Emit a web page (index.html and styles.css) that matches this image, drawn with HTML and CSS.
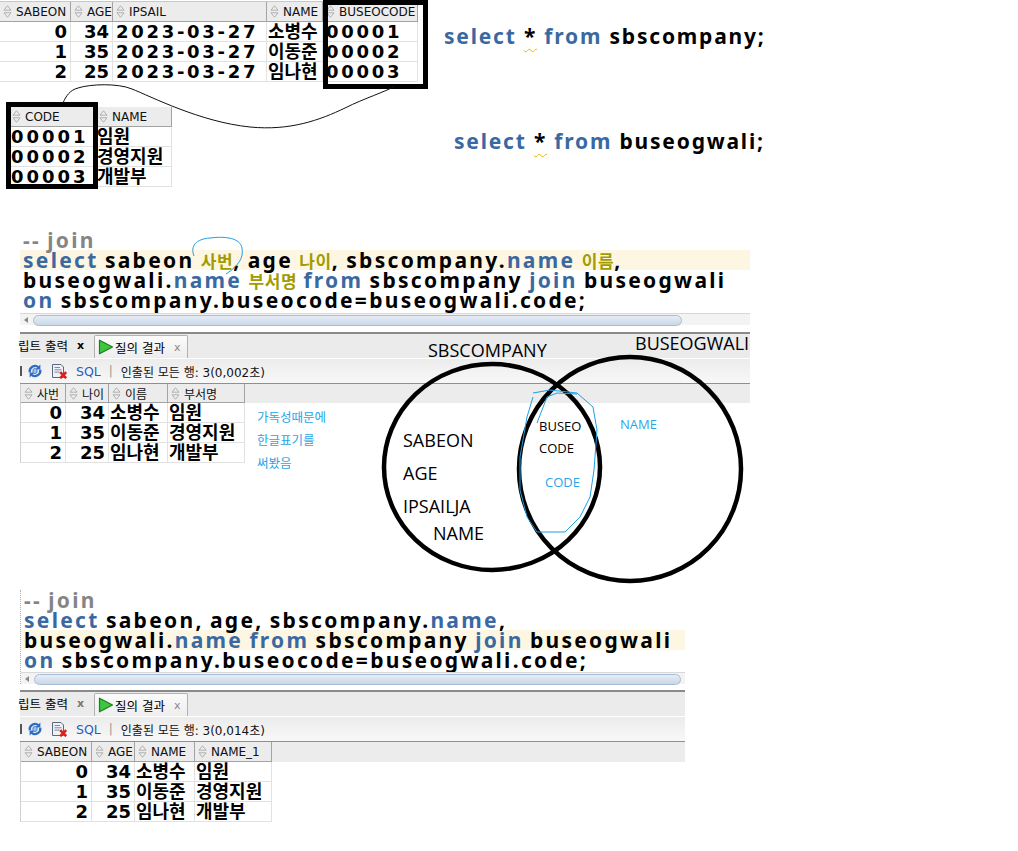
FILE: index.html
```html
<!DOCTYPE html>
<html lang="ko">
<head>
<meta charset="utf-8">
<title>join</title>
<link rel="stylesheet" href="styles.css">
</head>
<body>
<svg class="defs" width="0" height="0" aria-hidden="true">
  <defs>
    <symbol id="sort" viewBox="0 0 9 13">
      <path d="M4.5 0.8 L8 5.2 H1 Z M4.5 12.2 L8 7.8 H1 Z" fill="#ededed" stroke="#a9a9a9" stroke-width="0.9" stroke-linejoin="round"/>
    </symbol>
    <symbol id="play" viewBox="0 0 16 16">
      <path d="M1.5 1.2 L14.5 8 L1.5 14.8 Z" fill="#3ec73e" stroke="#1b7d1b" stroke-width="1.2" stroke-linejoin="round"/>
    </symbol>
    <symbol id="refresh" viewBox="0 0 16 16">
      <path d="M2.8 9.2a5.3 5.3 0 0 1 8.6-5" fill="none" stroke="#2d6dc6" stroke-width="2.3"/>
      <path d="M13.4 1.6v5H8.4z" fill="#2d6dc6"/>
      <path d="M13.2 6.8a5.3 5.3 0 0 1-8.6 5" fill="none" stroke="#2d6dc6" stroke-width="2.3"/>
      <path d="M2.6 14.4v-5h5z" fill="#2d6dc6"/>
      <ellipse cx="8" cy="8" rx="2.2" ry="2.6" fill="#9cc3ee" stroke="#2d6dc6" stroke-width="0.8"/>
    </symbol>
    <symbol id="clear" viewBox="0 0 17 16">
      <path d="M1.5 1.5h8.5l2.5 2.5v10.5h-11z" fill="#eef1f6" stroke="#5d6880"/>
      <path d="M3.5 4.5h5.5M3.5 6.8h7M3.5 9.1h5" stroke="#7f8aa2"/>
      <path d="M9.2 9.2l6 6M15.2 9.2l-6 6" stroke="#d8201c" stroke-width="2.6"/>
    </symbol>
  </defs>
</svg>

<main class="canvas">

  <!-- sbscompany table -->
  <section class="piece grid t1">
    <div class="hc"><svg class="si"><use href="#sort"/></svg>SABEON</div>
    <div class="hc"><svg class="si"><use href="#sort"/></svg>AGE</div>
    <div class="hc"><svg class="si"><use href="#sort"/></svg>IPSAIL</div>
    <div class="hc"><svg class="si"><use href="#sort"/></svg>NAME</div>
    <div class="hc"><svg class="si"><use href="#sort"/></svg>BUSEOCODE</div>

    <div class="dc num">0</div><div class="dc num">34</div><div class="dc wide">2023-03-27</div><div class="dc">소병수</div><div class="dc wide">00001</div>
    <div class="dc num">1</div><div class="dc num">35</div><div class="dc wide">2023-03-27</div><div class="dc">이동준</div><div class="dc wide">00002</div>
    <div class="dc num">2</div><div class="dc num">25</div><div class="dc wide">2023-03-27</div><div class="dc">임나현</div><div class="dc wide">00003</div>
  </section>
  <div class="piece frame f1"></div>

  <p class="piece sqlline s1"><span class="kw">select</span> <span class="star">*</span> <span class="kw">from</span> sbscompany;</p>
  <p class="piece sqlline s2"><span class="kw">select</span> <span class="star">*</span> <span class="kw">from</span> buseogwali;</p>

  <!-- buseogwali table -->
  <section class="piece grid t2">
    <div class="hc"><svg class="si"><use href="#sort"/></svg>CODE</div>
    <div class="hc"><svg class="si"><use href="#sort"/></svg>NAME</div>
    <div class="dc wide3">00001</div><div class="dc">임원</div>
    <div class="dc wide3">00002</div><div class="dc">경영지원</div>
    <div class="dc wide3">00003</div><div class="dc">개발부</div>
  </section>
  <div class="piece frame f2"></div>

  <svg class="piece link" width="420" height="60" viewBox="0 0 420 60">
    <path d="M63 23 C66 16 70 10 78 8 C90 4 118 3 132 9 C150 16 200 42 250 47 C290 51 320 40 345 28 C365 18 385 12 395 6" fill="none" stroke="#111" stroke-width="1"/>
  </svg>

  <!-- first query -->
  <section class="piece code c1">
    <div class="ln cm">-- join</div>
    <div class="ln hl"><span class="kw">select</span> sabeon <span class="al">사번</span>, age <span class="al">나이</span>, sbscompany.<span class="kw">name</span> <span class="al">이름</span>,</div>
    <div class="ln">buseogwali.<span class="kw">name</span> <span class="al">부서명</span> <span class="kw">from</span> sbscompany <span class="kw">join</span> buseogwali</div>
    <div class="ln"><span class="kw">on</span> sbscompany.buseocode=buseogwali.code;</div>
    <div class="hscroll"><i class="arr"></i><i class="thumb t-a"></i></div>
  </section>

  <svg class="piece mark" width="70" height="50" viewBox="0 0 70 50">
    <path d="M6 30 C2 20 8 13 22 12 C38 10 52 12 54 22 C56 32 50 40 38 48" fill="none" stroke="#1f9ee2" stroke-width="1"/>
  </svg>

  <!-- first result panel -->
  <section class="piece panel p1">
    <div class="tabbar">
      <span class="tab">립트 출력 <b class="x">x</b></span>
      <span class="tab active"><svg class="ic play"><use href="#play"/></svg>질의 결과 <span class="x2">x</span></span>
    </div>
    <div class="toolbar">
      <i class="cut"></i>
      <svg class="ic"><use href="#refresh"/></svg>
      <svg class="ic wide-ic"><use href="#clear"/></svg>
      <span class="sql">SQL</span><span class="sep">|</span><span class="info">인출된 모든 행: 3(0,002초)</span>
    </div>
    <div class="gridwrap">
      <div class="grid r1">
        <div class="hc"><svg class="si"><use href="#sort"/></svg>사번</div>
        <div class="hc"><svg class="si"><use href="#sort"/></svg>나이</div>
        <div class="hc"><svg class="si"><use href="#sort"/></svg>이름</div>
        <div class="hc"><svg class="si"><use href="#sort"/></svg>부서명</div>
        <div class="dc num">0</div><div class="dc num">34</div><div class="dc">소병수</div><div class="dc">임원</div>
        <div class="dc num">1</div><div class="dc num">35</div><div class="dc">이동준</div><div class="dc">경영지원</div>
        <div class="dc num">2</div><div class="dc num">25</div><div class="dc">임나현</div><div class="dc">개발부</div>
      </div>
    </div>
  </section>

  <div class="piece note">가독성때문에<br>한글표기를<br>써봤음</div>

  <!-- venn diagram -->
  <svg class="piece venn" width="380" height="260" viewBox="0 0 380 260">
    <ellipse cx="112" cy="137" rx="108" ry="103" fill="none" stroke="#000" stroke-width="4.5"/>
    <ellipse cx="250" cy="139" rx="111" ry="112" fill="none" stroke="#000" stroke-width="4.5"/>
    <path d="M153 63 L170 60 L197 63 L213 77 L217 100 L214 140 L210 167 L200 187 L185 202 L157 202 L147 187 L140 160 L140 127 L147 87 L153 67" fill="none" stroke="#1f9ee2" stroke-width="1"/>
    <path d="M157 93 L167 67 L177 63 L197 64" fill="none" stroke="#1f9ee2" stroke-width="1"/>
  </svg>
  <span class="piece vl big v-sbs">SBSCOMPANY</span>
  <span class="piece vl big v-bus">BUSEOGWALI</span>
  <span class="piece vl big v-sab">SABEON</span>
  <span class="piece vl big v-age">AGE</span>
  <span class="piece vl big v-ips">IPSAILJA</span>
  <span class="piece vl big v-nam">NAME</span>
  <span class="piece vl small v-buseo">BUSEO</span>
  <span class="piece vl small v-code">CODE</span>
  <span class="piece vl small blue v-code2">CODE</span>
  <span class="piece vl small blue v-name2">NAME</span>

  <!-- second query -->
  <section class="piece code c2">
    <div class="ln cm">-- join</div>
    <div class="ln"><span class="kw">select</span> sabeon, age, sbscompany.<span class="kw">name</span>,</div>
    <div class="ln hl">buseogwali.<span class="kw">name from</span> sbscompany <span class="kw">join</span> buseogwali</div>
    <div class="ln"><span class="kw">on</span> sbscompany.buseocode=buseogwali.code;</div>
    <div class="hscroll"><i class="arr"></i><i class="thumb t-b"></i></div>
  </section>

  <!-- second result panel -->
  <section class="piece panel p2">
    <div class="tabbar">
      <span class="tab">립트 출력 <b class="x light">x</b></span>
      <span class="tab active"><svg class="ic play"><use href="#play"/></svg>질의 결과 <span class="x2">x</span></span>
    </div>
    <div class="toolbar">
      <i class="cut"></i>
      <svg class="ic"><use href="#refresh"/></svg>
      <svg class="ic wide-ic"><use href="#clear"/></svg>
      <span class="sql">SQL</span><span class="sep">|</span><span class="info">인출된 모든 행: 3(0,014초)</span>
    </div>
    <div class="gridwrap">
      <div class="grid r2">
        <div class="hc"><svg class="si"><use href="#sort"/></svg>SABEON</div>
        <div class="hc"><svg class="si"><use href="#sort"/></svg>AGE</div>
        <div class="hc"><svg class="si"><use href="#sort"/></svg>NAME</div>
        <div class="hc"><svg class="si"><use href="#sort"/></svg>NAME_1</div>
        <div class="dc num">0</div><div class="dc num">34</div><div class="dc">소병수</div><div class="dc">임원</div>
        <div class="dc num">1</div><div class="dc num">35</div><div class="dc">이동준</div><div class="dc">경영지원</div>
        <div class="dc num">2</div><div class="dc num">25</div><div class="dc">임나현</div><div class="dc">개발부</div>
      </div>
    </div>
  </section>

</main>
</body>
</html>
```

FILE: styles.css
```css
* { box-sizing: border-box; margin: 0; padding: 0; }

html, body {
  width: 1018px;
  height: 851px;
  background: #fff;
  overflow: hidden;
}

body {
  font-family: "DejaVu Sans", "Noto Sans CJK KR", sans-serif;
  color: #000;
}

.defs { position: absolute; width: 0; height: 0; }

.canvas {
  position: relative;
  width: 1018px;
  height: 851px;
}

.piece { position: absolute; }

/* ---------- grids ---------- */
.grid {
  display: grid;
  grid-auto-rows: 20px;
}

.hc {
  display: flex;
  align-items: center;
  gap: 4px;
  padding-left: 3px;
  background: #ececec;
  border-right: 1px solid #a3a3a3;
  border-bottom: 1px solid #a3a3a3;
  font-size: 12px;
  font-weight: normal;
  white-space: nowrap;
  overflow: hidden;
  color: #111;
}

.si { width: 9px; height: 13px; flex: none; }

.dc {
  padding: 1px 3px 0 1px;
  border-right: 1px solid #e2e2e2;
  border-bottom: 1px solid #e2e2e2;
  font-size: 18px;
  font-weight: bold;
  line-height: 18px;
  white-space: nowrap;
  overflow: hidden;
}

.num { text-align: right; }
.wide { letter-spacing: 2.7px; padding-left: 3px; }
.wide3 { letter-spacing: 3px; padding-left: 2px; }

.t1 {
  left: 0;
  top: 1px;
  grid-template-columns: 71px 42px 154px 56px 95px;
  grid-template-rows: 20px;
  border-top: 1px solid #c8c8c8;
}

.t2 {
  left: 9px;
  top: 107px;
  grid-template-columns: 87px 76px;
}

.r1 { grid-template-columns: 45px 43px 59px 77px; grid-template-rows: 19px; border-left: 1px solid #d0d0d0; }
.r2 { grid-template-columns: 71px 43px 60px 77px; border-left: 1px solid #d0d0d0; }

/* thick black marker frames */
.frame { border: 5px solid #000; }
.f1 { left: 323px; top: 0; width: 105px; height: 89px; }
.f2 { left: 6px; top: 102px; width: 92px; height: 87px; }

.link { left: 0; top: 80px; }
.mark { left: 188px; top: 226px; }

/* ---------- sql text ---------- */
.sqlline,
.code {
  font-family: "Noto Sans", "Noto Sans CJK KR", sans-serif;
  font-size: 21px;
  font-weight: bold;
  line-height: 20px;
  letter-spacing: 2.3px;
  white-space: nowrap;
}
.sqlline { letter-spacing: 1.8px; }
.code { word-spacing: -1.5px; }

.kw { color: #3a69a2; }
.al { color: #a29c00; font-size: 17px; letter-spacing: 0.6px; }
.star {
  text-decoration: underline wavy #e8b800;
  text-decoration-thickness: 1px;
  text-underline-offset: 4px;
}

.s1 { left: 444px; top: 26px; }
.s2 { left: 454px; top: 131px; }

.code { left: 20px; }
.c1 { top: 230px; width: 730px; }
.c2 { top: 590px; width: 665px; border-left: 1px dotted #b0b0b0; }

.ln { height: 20px; padding-left: 3px; }
.cm { color: #858585; }
.hl { background: #fdf6e3; }

.hscroll {
  position: relative;
  height: 12px;
  margin-top: 3px;
  background: #f3f3f3;
  border-top: 1px solid #d8d8d8;
}
.c2 .hscroll { margin-top: 2px; }

.arr {
  position: absolute;
  left: 4px;
  top: 3px;
  border-right: 4px solid #888;
  border-top: 3px solid transparent;
  border-bottom: 3px solid transparent;
}

.thumb {
  position: absolute;
  left: 13px;
  top: 1px;
  height: 11px;
  border: 1px solid #a9bcd4;
  border-radius: 6px;
  background: linear-gradient(#e6edf6, #c9d7e8);
}
.t-a { width: 649px; }
.t-b { width: 647px; }

/* ---------- result panels ---------- */
.panel { left: 20px; display: flex; flex-direction: column; }
.p1 { top: 332px; width: 730px; }
.p2 { top: 690px; width: 665px; }

.tabbar {
  height: 26px;
  display: flex;
  align-items: flex-end;
  background: #ebebeb;
  border-top: 2px solid #8a8a8a;
  font-size: 12.5px;
  white-space: nowrap;
}

.tab {
  display: flex;
  align-items: center;
  height: 23px;
}
.tab:first-child { margin-left: -2px; width: 76px; padding-bottom: 2px; }

.x { font-size: 11px; margin-left: 9px; font-family: "DejaVu Sans", sans-serif; }
.x.light { color: #777; }

.active {
  width: 94px;
  border: 1px solid #b2b2b2;
  border-bottom: 0;
  border-radius: 2px 2px 0 0;
  background: linear-gradient(#fbfbfb, #ededed);
  padding-left: 3px;
}
.ic { width: 16px; height: 16px; flex: none; }
.play { margin-right: 1px; }
.x2 { color: #888; font-size: 11px; margin-left: 9px; }

.toolbar {
  height: 26px;
  display: flex;
  align-items: center;
  border-top: 1px solid #fff;
  border-bottom: 1px solid #8f8f8f;
  background: linear-gradient(#ececec, #f8f8f8);
  font-size: 12px;
  white-space: nowrap;
}
.cut { width: 2px; height: 10px; background: #555; margin-right: 5px; }
.toolbar .ic + .ic { margin-left: 8px; }
.wide-ic { width: 17px; }
.sql { color: #1f5fc0; margin-left: 8px; font-size: 12.5px; }
.sep { color: #999; margin: 0 8px; }
.info { color: #111; }

.gridwrap {
  background: linear-gradient(#ececec 0 19px, #fff 19px);
}
.p2 .gridwrap { background: linear-gradient(#ececec 0 20px, #fff 20px); }

.note {
  left: 257px;
  top: 406px;
  font-size: 12.5px;
  line-height: 23px;
  color: #2aa6e6;
  background: #fff;
}

/* ---------- venn ---------- */
.venn { left: 380px; top: 330px; z-index: 2; }

.vl {
  z-index: 3;
  font-family: "Open Sans", "Noto Sans", sans-serif;
  white-space: nowrap;
}
.big { font-size: 18px; line-height: 18px; }
.small { font-size: 13px; line-height: 13px; }
.blue { color: #2aa6e6; }

.v-sbs { left: 428px; top: 341px; }
.v-bus { left: 635px; top: 334px; }
.v-sab { left: 403px; top: 431px; }
.v-age { left: 403px; top: 464px; }
.v-ips { left: 403px; top: 497px; }
.v-nam { left: 433px; top: 524px; }
.v-buseo { left: 539px; top: 420px; }
.v-code { left: 539px; top: 442px; }
.v-code2 { left: 545px; top: 476px; }
.v-name2 { left: 620px; top: 418px; }
```
